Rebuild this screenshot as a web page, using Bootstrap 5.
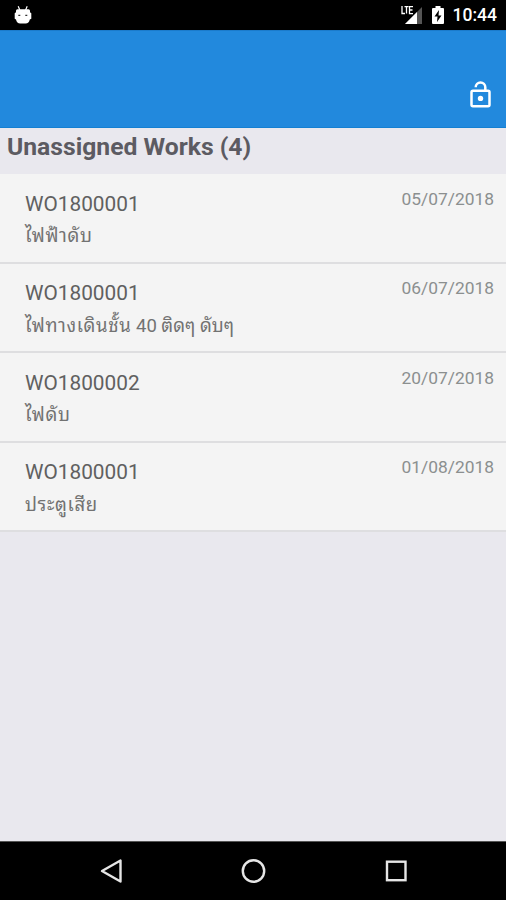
<!DOCTYPE html>
<html lang="th">
<head>
<meta charset="utf-8">
<meta name="viewport" content="width=device-width, initial-scale=1">
<title>Unassigned Works</title>
<link href="https://cdn.jsdelivr.net/npm/bootstrap@5.3.0/dist/css/bootstrap.min.css" rel="stylesheet">
<style>
body{font-family:Roboto,"Noto Sans Thai Looped",Loma,"Noto Sans Thai","Liberation Sans",sans-serif;background:#e9e8ee;height:900px;overflow:hidden}
.status-bar{height:30px;background:#000;color:#fff;font-size:17.5px;font-weight:500;line-height:32px}
.robot{margin-left:14px}
.clock{margin-right:9px}
.app-bar{height:98px;background:#2289dd;border-top:1px solid #1b7bcb;border-bottom:1px solid #1480d2;padding:0 15px 18px}
.section-title{height:46px;font-size:24.7px;font-weight:700;line-height:37px;color:#5c5b62;padding-left:7px}
.work-item{height:89.5px;background:#f4f4f4;border-bottom:2px solid #dedee0;padding:15.8px 12px 0 25px}
.work-id{font-size:20.8px;line-height:28px;color:#606060}
.work-desc{font-size:18.5px;line-height:28px;margin-top:4.6px;color:#727272;white-space:nowrap}
.wide{letter-spacing:.65px}
.work-date{font-size:17.4px;line-height:20px;color:#8b8f8f;margin-top:-1px}
.nav-keys{height:59px;background:#000;border-top:1px solid #555}
svg{display:block}
</style>
<script src="https://cdn.jsdelivr.net/npm/bootstrap@5.3.0/dist/js/bootstrap.bundle.min.js"></script>
</head>
<body class="d-flex flex-column">
<div class="status-bar d-flex align-items-center flex-shrink-0">
  <svg class="robot" width="18" height="20" viewBox="0 0 18 20" fill="#fff"><path d="M4.200 1.200 5.800 5M13.200 1.200 11.600 5" stroke="#fff" stroke-width="1.200"/><path d="M3.500 4.300h11q1.500 0 1.500 1.500v1.400l1.300 1v5.500l-1.500.8q-.8 3.800-4.200 4H6.200q-3.400-.2-4.200-4l-1.300-.8V8.200l1.300-1V5.800q0-1.500 1.500-1.500z"/><path d="M4.300 9.700h2v1.300h-2zM11.300 9.700h2v1.300h-2z" fill="#333"/></svg>
  <svg class="ms-auto" width="23" height="22" viewBox="0 0 23 22"><path d="M22 3v17H5z" fill="#555"/><path d="M17 8V20H5z" fill="#fff"/><path d="M2 2v7.500H5M4.500 2.600h4M6.500 2.600v7M13 2.600H9.500v7h3.500M9.500 6h3" fill="none" stroke="#fff" stroke-width="1.300"/></svg>
  <svg class="ms-2" width="14" height="20" viewBox="0 0 14 20"><path d="M4.500 1h5v2H12q1 0 1 1v14q0 1-1 1H2q-1 0-1-1V4q0-1 1-1h2.500z" fill="#fff"/><path d="M8 5 3.500 11.500H6.500L6 17l4.500-6.500H7.500z" fill="#000"/></svg>
  <span class="clock ms-2">10:44</span>
</div>
<header class="app-bar d-flex justify-content-end align-items-end flex-shrink-0">
  <svg width="21" height="28" viewBox="0 0 21 28" fill="none" stroke="#fff" stroke-width="2.500"><rect x="1.500" y="9.700" width="18" height="15.500" rx="1.500"/><path d="M5.700 6.200a4.800 4.800 0 0 1 9.600 0v3.300"/><circle cx="10.500" cy="17.400" r="2.700" fill="#fff" stroke="none"/></svg>
</header>
<main class="flex-grow-1">
  <h1 class="section-title mb-0"><span>Unassigned Works (4)</span></h1>
  <ul class="list-unstyled mb-0">
    <li class="work-item d-flex justify-content-between align-items-start"><div><div class="work-id">WO1800001</div><div class="work-desc wide">ไฟฟ้าดับ</div></div><time class="work-date">05/07/2018</time></li>
    <li class="work-item d-flex justify-content-between align-items-start"><div><div class="work-id">WO1800001</div><div class="work-desc"><span class="wide">ไฟทางเดินชั้น</span> 40 ติดๆ ดับๆ</div></div><time class="work-date">06/07/2018</time></li>
    <li class="work-item d-flex justify-content-between align-items-start"><div><div class="work-id">WO1800002</div><div class="work-desc wide">ไฟดับ</div></div><time class="work-date">20/07/2018</time></li>
    <li class="work-item d-flex justify-content-between align-items-start"><div><div class="work-id">WO1800001</div><div class="work-desc wide">ประตูเสีย</div></div><time class="work-date">01/08/2018</time></li>
  </ul>
</main>
<nav class="nav-keys d-flex justify-content-between flex-shrink-0">
  <svg width="506" height="58" viewBox="0 0 506 58" fill="none" stroke="#e6e6e6" stroke-width="2.400"><path d="M120.500 18.500v21L102 29z" stroke-linejoin="round"/><circle cx="253.500" cy="29" r="10.700"/><rect x="387" y="19.700" width="18.500" height="18.500"/></svg>
</nav>
</body>
</html>
